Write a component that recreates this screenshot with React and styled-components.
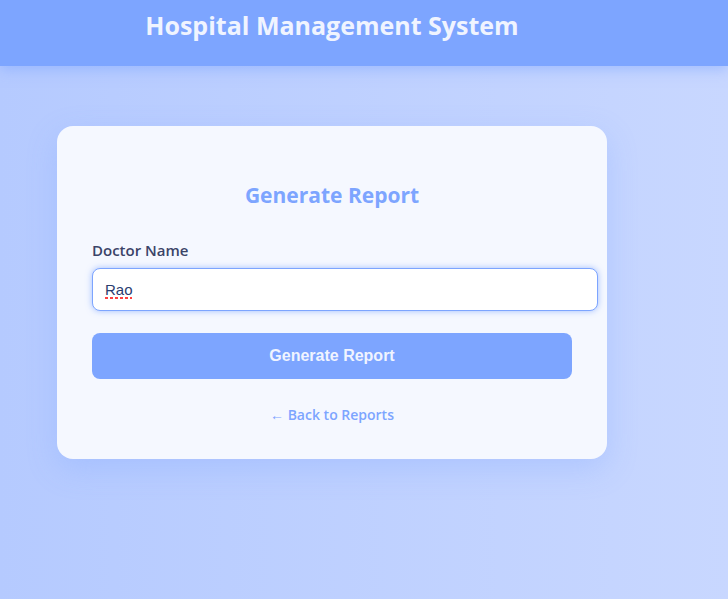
import React, { useState } from "react";
import styled, { createGlobalStyle } from "styled-components";

const GlobalStyle = createGlobalStyle`
  body {
    margin: 0;
    min-height: 100vh;
    background: linear-gradient(to right, #b5caff, #c8d7ff);
    font-family: "Segoe UI", "Open Sans", "Noto Sans", sans-serif;
    color: #3b4468;
  }
`;

const Page = styled.div`
  display: flex;
  flex-direction: column;
`;

const Header = styled.header`
  padding: 8px 64px 24px 0;
  background: #7da5ff;
  box-shadow: 0 4px 12px rgba(125, 165, 255, 0.5);
  text-align: center;
`;

const SiteTitle = styled.h1`
  margin: 0;
  font-size: 25px;
  line-height: 34px;
  font-weight: 700;
  color: #f0f4ff;
`;

const Main = styled.main`
  display: flex;
  justify-content: center;
  padding: 60px 64px 60px 0;
`;

const Card = styled.section`
  box-sizing: border-box;
  width: 100%;
  max-width: 550px;
  padding: 53px 35px 32px;
  border-radius: 16px;
  background: #f5f8ff;
  box-shadow: 0 10px 30px rgba(125, 165, 255, 0.3);
`;

const CardTitle = styled.h2`
  margin: 0 0 27px;
  font-size: 21px;
  line-height: 32px;
  font-weight: 700;
  text-align: center;
  color: #7da5ff;
`;

const Form = styled.form`
  display: flex;
  flex-direction: column;
`;

const Label = styled.label`
  margin-bottom: 6px;
  font-size: 15px;
  line-height: 24px;
  font-weight: 600;
`;

const TextInput = styled.input`
  box-sizing: border-box;
  width: calc(100% + 26px);
  height: 43px;
  margin-bottom: 22px;
  padding: 0 12px;
  border: 1px solid #7da5ff;
  border-radius: 8px;
  outline: none;
  background: repeating-linear-gradient(
      to right,
      #ff4040 0 3px,
      transparent 3px 5px
    )
    12px 28px / 27px 2px no-repeat #ffffff;
  box-shadow: 0 0 6px rgba(125, 165, 255, 0.7);
  font-family: "Liberation Sans", Arial, sans-serif;
  font-size: 15px;
  color: #2a3d70;
`;

const SubmitButton = styled.button`
  height: 46px;
  border: 0;
  border-radius: 8px;
  background: #7da5ff;
  font-family: "Liberation Sans", Arial, sans-serif;
  font-size: 16px;
  font-weight: 700;
  color: #f0f4ff;
  cursor: pointer;
`;

const BackLink = styled.a`
  display: block;
  width: fit-content;
  margin: 24px auto 0;
  font-size: 14px;
  line-height: 24px;
  font-weight: 600;
  text-decoration: none;
  color: #7da5ff;
`;

export default function App() {
  const [doctor, setDoctor] = useState("Rao");

  return (
    <Page>
      <GlobalStyle />
      <Header>
        <SiteTitle>Hospital Management System</SiteTitle>
      </Header>
      <Main>
        <Card>
          <CardTitle>Generate Report</CardTitle>
          <Form onSubmit={(event) => event.preventDefault()}>
            <Label htmlFor="doctor-name">Doctor Name</Label>
            <TextInput
              id="doctor-name"
              type="text"
              value={doctor}
              onChange={(event) => setDoctor(event.target.value)}
            />
            <SubmitButton type="submit">Generate Report</SubmitButton>
          </Form>
          <BackLink href="#reports">← Back to Reports</BackLink>
        </Card>
      </Main>
    </Page>
  );
}
